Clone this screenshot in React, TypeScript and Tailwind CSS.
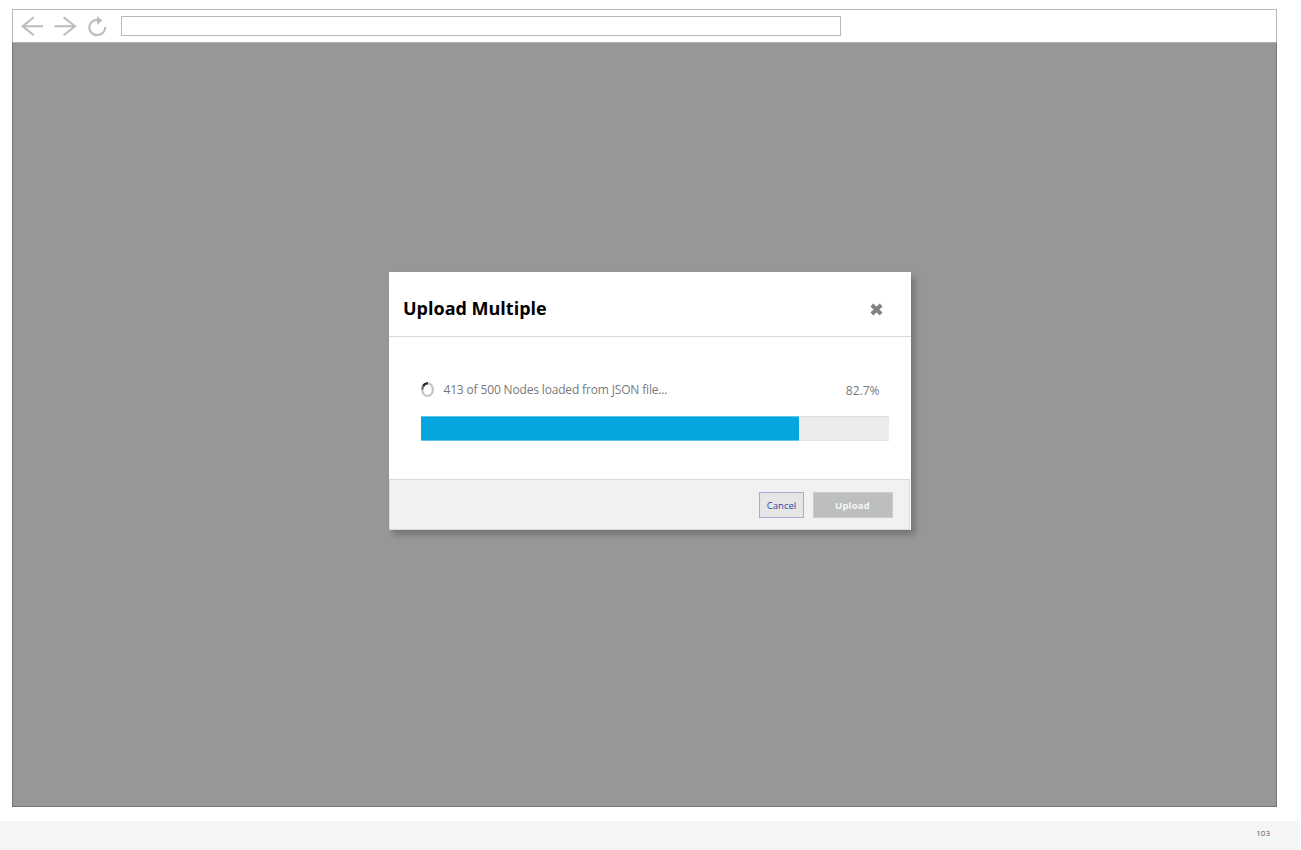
const loaded = 413;
const total = 500;
const percent = 82.7;

function BrowserBar() {
  return (
    <div className="flex h-[33px] shrink-0 items-start border border-b-0 border-[#b9b9b9] bg-white">
      <svg className="h-8 w-[108px] shrink-0" viewBox="13 10 108 32" fill="none" stroke="#bcbcbc" strokeWidth="2.1">
        <path d="M43 26.3H22.6M33.8 17.3L22.6 26.3L33.8 35.3" />
        <path d="M54.5 26.3H75M63.6 17.3L75 26.3L63.6 35.3" />
        <path d="M99 19.9H97A8 7.6 0 1 0 105.2 27" />
        <path d="M97 16L102.4 20.4L97 24.8Z" fill="#bcbcbc" stroke="none" />
      </svg>
      <div className="mt-[6px] h-5 w-[720px] border border-[#b9b9b9] bg-white" />
    </div>
  );
}

function Spinner() {
  return (
    <svg className="h-4 w-[14px] shrink-0" viewBox="0 0 14 16" fill="none" strokeWidth="2.2">
      <ellipse cx="6.6" cy="7.7" rx="5.3" ry="6.3" stroke="#c6c6c6" />
      <path d="M1.3 7.7A5.3 6.3 0 0 1 2.8 3.3" stroke="#777777" />
      <path d="M2.2 4.1A5.3 6.3 0 0 1 7 1.4" stroke="#2c2c2c" />
    </svg>
  );
}

function UploadDialog() {
  return (
    <div className="flex h-[258px] w-[522px] flex-col bg-white shadow-[4px_5px_6px_rgba(0,0,0,0.22)]">
      <div className="flex h-[65px] items-center justify-between border-b border-[#d9d9d9] pr-[28px] pl-[14px] pt-[9px]">
        <h1 className="-mt-[2px] text-[18px] leading-6 font-bold text-black">Upload Multiple</h1>
        <svg className="mt-[2px] h-[13px] w-[13px]" viewBox="0 0 13 13" stroke="#808285" strokeWidth="4.1">
          <path d="M1.9 2L11.1 11M11.1 2L1.9 11" />
        </svg>
      </div>
      <div className="flex flex-1 flex-col pl-8 pr-[21px] pt-[45px]">
        <div className="flex h-4 items-center text-[12px] leading-4 text-[#77787b]">
          <Spinner />
          <span className="ml-[8.5px] whitespace-nowrap tracking-[-0.18px] [word-spacing:0.1px]">
            {loaded} of {total} Nodes loaded from JSON file...
          </span>
          <span className="mt-[2px] mr-[10.5px] ml-auto">{percent}%</span>
        </div>
        <div className="mt-[18px] flex h-[25px] w-[468px] border-y border-t-[#dedede] border-b-[#e3e3e3] bg-[#ececec]">
          <div className="-my-px w-[378px] border-y border-[#62c5ea] bg-[#08a6e1]" />
        </div>
      </div>
      <div className="mr-px flex h-[51px] border border-[#d9d9d9] bg-[#f1f1f1] pt-3 pr-4">
        <div className="ml-auto flex gap-[9px] text-[9.5px]">
          <button className="h-[26px] w-[45px] border border-[#a3acd4] bg-[#e6e6e7] pt-[3px] text-[#2747a3]">Cancel</button>
          <button className="h-[26px] w-20 border border-[#cacbcd] bg-[#bcbec0] pt-[3px] pr-px font-bold tracking-[0.2px] text-[#f8f8f8]">Upload</button>
        </div>
      </div>
    </div>
  );
}

export default function App() {
  return (
    <div className="flex h-[850px] w-[1301px] flex-col bg-white pt-[9px] font-['Open_Sans',sans-serif]">
      <div className="ml-3 flex h-[798px] w-[1265px] flex-col">
        <BrowserBar />
        <main className="flex flex-1 items-start border border-[#767676] border-t-[#b0b0b0] bg-[#979797] pt-[229px] pl-[376px]">
          <UploadDialog />
        </main>
      </div>
      <footer className="mt-[14px] flex h-[29px] w-[1300px] items-start justify-end bg-[#f5f5f5] pt-[6px] pr-[30px] text-[8px] leading-3 text-[#58595b]">
        103
      </footer>
    </div>
  );
}
